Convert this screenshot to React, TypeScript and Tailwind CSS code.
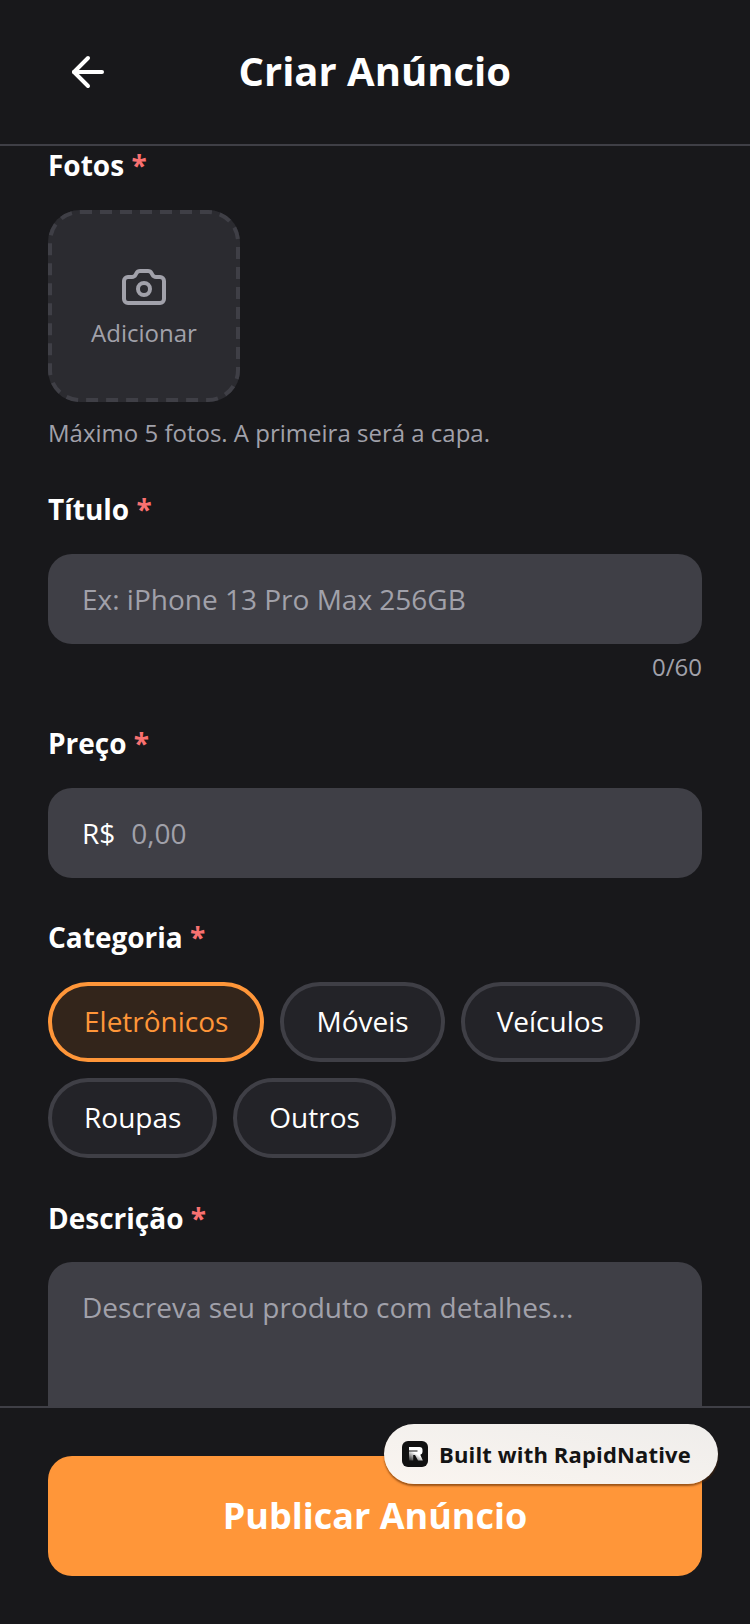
import { ArrowLeft, Camera } from 'lucide-react';

function Label({ text }: { text: string }) {
  return (
    <div className="text-[28px] leading-[36px] font-bold text-white">
      {text} <span className="text-[#f87171]">*</span>
    </div>
  );
}

function Chip({ text, active }: { text: string; active?: boolean }) {
  return (
    <div
      className={
        active
          ? 'h-[80px] px-[32px] pb-[2px] flex items-center rounded-full border-4 border-[#ff9639] bg-[#33251b] text-[#ff9639] text-[28px]'
          : 'h-[80px] px-[32px] pb-[2px] flex items-center rounded-full border-4 border-[#3f3f46] bg-[#232328] text-white text-[28px]'
      }
    >
      {text}
    </div>
  );
}

export default function App() {
  return (
    <div className="relative w-[750px] h-[1624px] bg-[#18181b] flex flex-col overflow-hidden font-['Open_Sans',sans-serif]">
      <header className="h-[146px] shrink-0 border-b-2 border-[#3f3f46] flex items-center">
        <div className="w-[88px] ml-[48px] shrink-0">
          <ArrowLeft className="w-[48px] h-[48px] ml-[16px] text-white" strokeWidth={2} />
        </div>
        <h1 className="ml-[102.5px] -mt-[2px] text-[40px] font-bold text-white leading-[48px]">Criar Anúncio</h1>
      </header>

      <main className="flex-1 overflow-hidden px-[48px]">
        <div className="mt-[1px]">
          <Label text="Fotos" />
        </div>
        <div className="relative mt-[27px] w-[192px] h-[192px] rounded-[32px] bg-[#2b2b30] flex flex-col items-center justify-center">
          {/* dash pattern is longer than what border-dashed draws */}
          <svg className="absolute inset-0" width="192" height="192" fill="none">
            <rect x="2" y="2" width="188" height="188" rx="30" stroke="#3f3f46" strokeWidth="4" strokeDasharray="12 8" />
          </svg>
          <Camera className="w-[48px] h-[48px] text-[#a1a1aa]" strokeWidth={2} />
          <span className="mt-[6px] text-[24px] leading-[32px] text-[#a1a1aa]">Adicionar</span>
        </div>
        <p className="mt-[15px] text-[24px] leading-[32px] text-[#a1a1aa]">Máximo 5 fotos. A primeira será a capa.</p>

        <div className="mt-[42px]">
          <Label text="Título" />
        </div>
        <div className="mt-[27px] h-[90px] rounded-[24px] bg-[#3f3f46] px-[34px] flex items-center text-[28px] text-[#a1a1aa]">
          Ex: iPhone 13 Pro Max 256GB
        </div>
        <div className="mt-[7px] text-right text-[24px] leading-[32px] text-[#a1a1aa]">0/60</div>

        <div className="mt-[42px]">
          <Label text="Preço" />
        </div>
        <div className="mt-[27px] h-[90px] rounded-[24px] bg-[#3f3f46] px-[34px] flex items-center text-[28px]">
          <span className="text-white">R$</span>
          <span className="ml-[16px] text-[#a1a1aa]">0,00</span>
        </div>

        <div className="mt-[41px]">
          <Label text="Categoria" />
        </div>
        <div className="mt-[27px] flex flex-wrap gap-[16px]">
          <Chip text="Eletrônicos" active />
          <Chip text="Móveis" />
          <Chip text="Veículos" />
          <Chip text="Roupas" />
          <Chip text="Outros" />
        </div>

        <div className="mt-[42px]">
          <Label text="Descrição" />
        </div>
        <div className="mt-[26px] h-[240px] rounded-[24px] bg-[#3f3f46] px-[34px] py-[23px] text-[28px] leading-[44px] text-[#a1a1aa]">
          Descreva seu produto com detalhes...
        </div>
      </main>

      <footer className="h-[218px] shrink-0 border-t-2 border-[#3f3f46] px-[48px] pt-[48px]">
        <div className="h-[120px] rounded-[24px] bg-[#ff9639] flex items-center justify-center text-[36px] font-bold text-white">
          Publicar Anúncio
        </div>
      </footer>

      <div className="absolute left-[384px] top-[1424px] w-[334px] h-[60px] rounded-full bg-gradient-to-tr from-[#faf5f0] to-[#efedeb] shadow-[0_2px_2px_rgba(90,40,0,0.6)] flex items-center pl-[18px]">
        <svg width="26" height="26" viewBox="0 0 26 26">
          <defs>
            <linearGradient id="rn-stem" gradientUnits="userSpaceOnUse" x1="13" y1="12" x2="8" y2="20">
              <stop offset="0" stopColor="#ffffff" />
              <stop offset="1" stopColor="#2a2a2a" />
            </linearGradient>
          </defs>
          <rect width="26" height="26" rx="6" fill="#111111" />
          <path
            fillRule="evenodd"
            d="M7 6H17.5Q20.5 6 20.5 9V11Q20.5 13.2 18.3 13.7L20.8 19.5H16L13 14H11.2V19.5H7ZM7 9.6V10.6H15.5V9.6Z"
            fill="url(#rn-stem)"
          />
        </svg>
        <span className="ml-[11px] text-[22px] font-bold tracking-[0.15px] text-[#141414] whitespace-nowrap">Built with RapidNative</span>
      </div>
    </div>
  );
}
